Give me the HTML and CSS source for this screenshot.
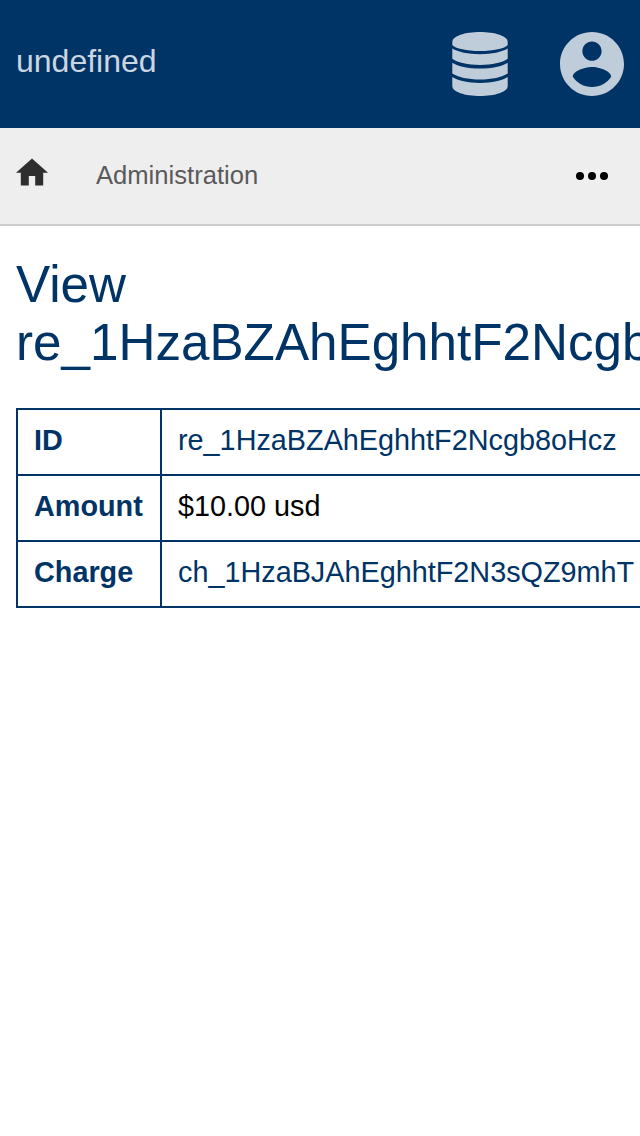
FILE: index.html
```html
<!DOCTYPE html>
<html lang="en">
<head>
<meta charset="utf-8">
<title>View refund</title>
<link rel="stylesheet" href="styles.css">
</head>
<body>
<header class="topbar">
  <span class="brand">undefined</span>
  <nav class="menus">
    <svg class="database" viewBox="0 0 56 64">
      <path d="M.3 10C.3 4 13 0 28 0s27.700 4 27.700 10v3C53 16.500 41 19 28 19S3 16.500.3 13z"/>
      <path d="M.3 16.500C6 20 16 22.200 28 22.200S50 20 55.700 16.500v10.300C50 30.800 40 33 28 33S6 30.800.3 26.800z"/>
      <path d="M.3 30.700C6 34.300 16 36.600 28 36.600S50 34.300 55.700 30.700v10.800C50 45.200 40 47.500 28 47.500S6 45.200.3 41.500z"/>
      <path d="M.3 45C6 48.600 16 50.900 28 50.900S50 48.600 55.700 45v9C55.700 60 43 64 28 64S.3 60 .3 54z"/>
    </svg>
    <svg class="account" viewBox="2 2 20 20">
      <path d="M12 2C6.480 2 2 6.480 2 12s4.480 10 10 10 10-4.480 10-10S17.520 2 12 2zm0 3c1.660 0 3 1.340 3 3s-1.340 3-3 3-3-1.340-3-3 1.340-3 3-3zm0 14.200c-2.500 0-4.710-1.280-6-3.220.03-1.990 4-3.080 6-3.080 1.990 0 5.970 1.090 6 3.080-1.290 1.940-3.500 3.220-6 3.220z"/>
    </svg>
  </nav>
</header>
<nav class="navbar">
  <svg class="home" viewBox="2 2.750 20 17.500"><path d="M10 20v-6h4v6h5v-8h3L12 3 2 12h3v8z"/></svg>
  <span class="crumb">Administration</span>
  <svg class="more" viewBox="0 0 32 8"><circle cx="4" cy="4" r="4"/><circle cx="16" cy="4" r="4"/><circle cx="28" cy="4" r="4"/></svg>
</nav>
<main class="content">
  <h1 class="title">View re_1HzaBZAhEghhtF2Ncgb8oHcz</h1>
  <table class="details">
    <tr><th>ID</th><td><a class="link">re_1HzaBZAhEghhtF2Ncgb8oHcz</a></td></tr>
    <tr><th>Amount</th><td>$10.00 usd</td></tr>
    <tr><th>Charge</th><td><a class="link">ch_1HzaBJAhEghhtF2N3sQZ9mhT</a></td></tr>
  </table>
</main>
</body>
</html>
```
FILE: styles.css
```css
* {
  box-sizing: border-box;
}

body {
  margin: 0;
  height: 1136px;
  overflow: hidden;
  background: #fff;
  color: #000;
  font-family: "Liberation Sans", Arial, sans-serif;
  font-size: 28.8px;
}

svg {
  display: block;
  flex: none;
}

.topbar {
  display: flex;
  align-items: center;
  justify-content: space-between;
  height: 128px;
  padding: 0 16px;
  background: #003366;
}

.brand {
  padding-bottom: 6px;
  color: #ccd6e0;
  font-size: 32px;
  line-height: 36px;
}

.menus {
  display: flex;
  gap: 52px;
  fill: #bfccd9;
}

.database {
  width: 56px;
  height: 64px;
}

.account {
  width: 64px;
  height: 64px;
}

.navbar {
  display: flex;
  align-items: center;
  height: 98px;
  padding: 0 32px 0 16px;
  background: #eee;
  border-bottom: 2px solid #ccc;
}

.home {
  width: 32px;
  height: 28px;
  margin-bottom: 8px;
  fill: #2e2e2e;
}

.crumb {
  margin-left: 48px;
  padding-bottom: 2px;
  color: #5a5a5a;
  font-size: 25.6px;
  line-height: 30px;
}

.more {
  width: 32px;
  height: 8px;
  margin-left: auto;
}

.content {
  padding: 30px 16px 0;
}

.title {
  margin: 0 0 36px;
  color: #003366;
  font-size: 51.2px;
  font-weight: 400;
  line-height: 58px;
}

.details {
  border-collapse: collapse;
  color: #000;
}

.details th,
.details td {
  height: 66px;
  padding: 0 16px 4px;
  border: 2px solid #003366;
  line-height: 32px;
  text-align: left;
  white-space: nowrap;
}

.details th {
  width: 144px;
  min-width: 144px;
  color: #003366;
}

.link {
  color: #003366;
}
```
